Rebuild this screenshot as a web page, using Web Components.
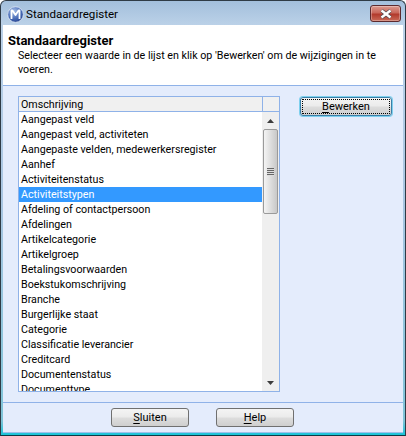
<!DOCTYPE html>
<html>
<head>
<meta charset="utf-8">
<title>Standaardregister</title>
<style>
html, body { margin: 0; padding: 0; background: #fff; }
body { width: 406px; height: 436px; overflow: hidden; font: 10.7px Roboto, "Liberation Sans", sans-serif; color: #000; }
</style>
</head>
<body>
<std-dialog title-text="Standaardregister">
    <b slot="heading">Standaardregister</b>
    <span slot="intro">Selecteer een waarde in de lijst en klik op 'Bewerken' om de wijzigingen in te voeren.</span>
    <reg-grid slot="grid" column="Omschrijving"></reg-grid>
    <win-button slot="side" focused key="B" rest="ewerken"></win-button>
    <win-button slot="foot" key="S" rest="luiten"></win-button>
    <win-button slot="foot" key="H" rest="elp"></win-button>
</std-dialog>

<script>
const rows = [
    'Aangepast veld',
    'Aangepast veld, activiteten',
    'Aangepaste velden, medewerkersregister',
    'Aanhef',
    'Activiteitenstatus',
    'Activiteitstypen',
    'Afdeling of contactpersoon',
    'Afdelingen',
    'Artikelcategorie',
    'Artikelgroep',
    'Betalingsvoorwaarden',
    'Boekstukomschrijving',
    'Branche',
    'Burgerlijke staat',
    'Categorie',
    'Classificatie leverancier',
    'Creditcard',
    'Documentenstatus',
    'Documenttype'
];

class StdDialog extends HTMLElement {
    constructor() {
        super();
        this.attachShadow({ mode: 'open' });
    }

    connectedCallback() {
        this.shadowRoot.innerHTML = `
            <style>
                :host {
                    display: flex;
                    flex-direction: column;
                    width: 406px;
                    height: 436px;
                    box-sizing: border-box;
                    border: 1px solid #2f3b46;
                    border-bottom-color: #0c3a44;
                    border-radius: 6px 6px 0 0;
                    background: linear-gradient(#a3bfdc, #bcd2e8 25px, #a9c6e2 200px, #7fc4d8 420px, #18c4d8 434px);
                }
                .title {
                    height: 24px;
                    flex: none;
                    display: flex;
                    align-items: center;
                    gap: 2px;
                    padding: 2px 4px 0 6px;
                    box-sizing: border-box;
                    font-size: 11.6px;
                }
                .title span { flex: 1; }
                .body {
                    flex: 1;
                    display: flex;
                    flex-direction: column;
                    margin: 0 2px 2px;
                    min-height: 0;
                    background: #e4ecfc;
                    border-bottom: 1px solid #9ec0ea;
                }
                .head {
                    height: 61px;
                    flex: none;
                    box-sizing: border-box;
                    background: #fff;
                    border-bottom: 1px solid #8fb2e8;
                    padding: 9px 0 0 5px;
                    line-height: 14px;
                }
                .heading { font-size: 13px; }
                .intro { display: block; padding: 1px 8px 0 10px; line-height: 14px; }
                .main {
                    flex: 1;
                    display: flex;
                    min-height: 0;
                    gap: 20px;
                    padding: 10px 0 0 15px;
                }
                .foot {
                    height: 30px;
                    flex: none;
                    display: flex;
                    justify-content: center;
                    align-items: flex-start;
                    gap: 27px;
                    box-sizing: border-box;
                    padding: 5px 1px 0 0;
                    border-top: 1px solid #8fb2e8;
                }
            </style>
            <div class="title">
                <svg width="17" height="17" viewBox="0 0 17 17">
                    <defs>
                        <radialGradient id="orb" cx=".4" cy=".3" r=".75">
                            <stop offset="0" stop-color="#a6bfe8"/>
                            <stop offset=".65" stop-color="#4468b4"/>
                            <stop offset="1" stop-color="#24408a"/>
                        </radialGradient>
                    </defs>
                    <circle cx="8.500" cy="8.500" r="7.800" fill="url(#orb)" stroke="#dfe8f5" stroke-width=".8"/>
                    <path d="M4.500 13V4.500h1L8.500 9l3-4.500h1V13" fill="none" stroke="#fff" stroke-width="1.800" stroke-linejoin="round"/>
                </svg>
                <span>${this.getAttribute('title-text')}</span>
                <close-box></close-box>
            </div>
            <div class="body">
                <div class="head">
                    <div class="heading"><slot name="heading"></slot></div>
                    <div class="intro"><slot name="intro"></slot></div>
                </div>
                <div class="main">
                    <slot name="grid"></slot>
                    <div><slot name="side"></slot></div>
                </div>
                <div class="foot"><slot name="foot"></slot></div>
            </div>
        `;
    }
}

class CloseBox extends HTMLElement {
    constructor() {
        super();
        this.attachShadow({ mode: 'open' }).innerHTML = `
            <style>
                :host {
                    display: flex;
                    align-items: center;
                    justify-content: center;
                    width: 31px;
                    height: 17px;
                    margin-top: -1px;
                    box-sizing: border-box;
                    border: 1px solid #5c2a2e;
                    border-radius: 3px;
                    background: linear-gradient(#dc9a8f, #c9675a 45%, #b23a2c 55%, #c96a58);
                    box-shadow: inset 0 0 0 1px rgba(255,255,255,.3);
                }
            </style>
            <svg width="14" height="10" viewBox="0 0 14 10">
                <path d="M2.500 1.500l9 7M11.500 1.500l-9 7" stroke="#4a4a52" stroke-width="3.600" fill="none"/>
                <path d="M2.500 1.500l9 7M11.500 1.500l-9 7" stroke="#fff" stroke-width="2.400" fill="none"/>
            </svg>
        `;
    }
}

class RegGrid extends HTMLElement {
    constructor() {
        super();
        this.attachShadow({ mode: 'open' });
    }

    connectedCallback() {
        const items = rows.map((r, i) =>
            `<div class="row${i === 5 ? ' sel' : ''}">${r}</div>`).join('');
        this.shadowRoot.innerHTML = `
            <style>
                :host {
                    display: flex;
                    flex-direction: column;
                    width: 262px;
                    height: 296px;
                    box-sizing: border-box;
                    border: 1px solid #8fb2e8;
                    background: #fff;
                }
                .hdr {
                    height: 14px;
                    flex: none;
                    display: flex;
                    background: #f0f0f0;
                    border-bottom: 1px solid #8fb2e8;
                }
                .hdr div:first-child { flex: 1; padding-left: 2px; line-height: 15px; }
                .hdr div:last-child { width: 16px; border-left: 1px solid #8fb2e8; }
                .wrap { flex: 1; display: flex; min-height: 0; }
                .list { flex: 1; overflow: hidden; }
                .row { height: 15px; line-height: 15px; padding-left: 2px; white-space: nowrap; }
                .sel { background: #3399ff; color: #fff; }
            </style>
            <div class="hdr"><div>${this.getAttribute('column')}</div><div></div></div>
            <div class="wrap">
                <div class="list">${items}</div>
                <scroll-bar></scroll-bar>
            </div>
        `;
    }
}

class ScrollBar extends HTMLElement {
    constructor() {
        super();
        this.attachShadow({ mode: 'open' }).innerHTML = `
            <style>
                :host {
                    display: flex;
                    flex-direction: column;
                    align-items: center;
                    width: 17px;
                    flex: none;
                    background: #efefef;
                }
                .arrow { height: 17px; flex: none; display: flex; align-items: center; justify-content: center; }
                .thumb {
                    width: 15px;
                    height: 85px;
                    flex: none;
                    box-sizing: border-box;
                    border: 1px solid #9a9a9a;
                    border-radius: 2px;
                    background: linear-gradient(90deg, #f4f4f4, #dedede 50%, #c8c8c8);
                    display: flex;
                    flex-direction: column;
                    align-items: center;
                    justify-content: center;
                    gap: 1px;
                }
                .thumb i { display: block; width: 7px; height: 1px; background: #666; box-shadow: 0 1px 0 #ddd; }
                .gap { flex: 1; }
            </style>
            <div class="arrow">
                <svg width="7" height="4" viewBox="0 0 7 4"><path d="M3.500 0L7 4H0z" fill="#3c3c3c"/></svg>
            </div>
            <div class="thumb"><i></i><i></i><i></i><i></i></div>
            <div class="gap"></div>
            <div class="arrow">
                <svg width="7" height="4" viewBox="0 0 7 4"><path d="M0 0h7L3.500 4z" fill="#3c3c3c"/></svg>
            </div>
        `;
    }
}

class WinButton extends HTMLElement {
    constructor() {
        super();
        this.attachShadow({ mode: 'open' });
    }

    connectedCallback() {
        const focused = this.hasAttribute('focused');
        this.shadowRoot.innerHTML = `
            <style>
                :host {
                    display: block;
                    width: ${focused ? 92 : 78}px;
                    height: 19px;
                    margin-top: ${focused ? 1 : 0}px;
                    box-sizing: border-box;
                    border: 1px solid ${focused ? '#3a7fa8' : '#707070'};
                    border-radius: 3px;
                    background: linear-gradient(#f4f4f4, #ebebeb 48%, #dddddd 52%, #cfcfcf);
                    box-shadow: ${focused ? '0 0 0 1px #7ed0ee' : 'none'};
                    font-size: 11px;
                    text-align: center;
                    line-height: 17px;
                    ${focused ? 'outline: 1px dotted #000; outline-offset: -3px;' : ''}
                }
                u { text-underline-offset: 2px; }
            </style>
            <u>${this.getAttribute('key')}</u>${this.getAttribute('rest')}
        `;
    }
}

customElements.define('std-dialog', StdDialog);
customElements.define('close-box', CloseBox);
customElements.define('reg-grid', RegGrid);
customElements.define('scroll-bar', ScrollBar);
customElements.define('win-button', WinButton);
</script>
</body>
</html>
